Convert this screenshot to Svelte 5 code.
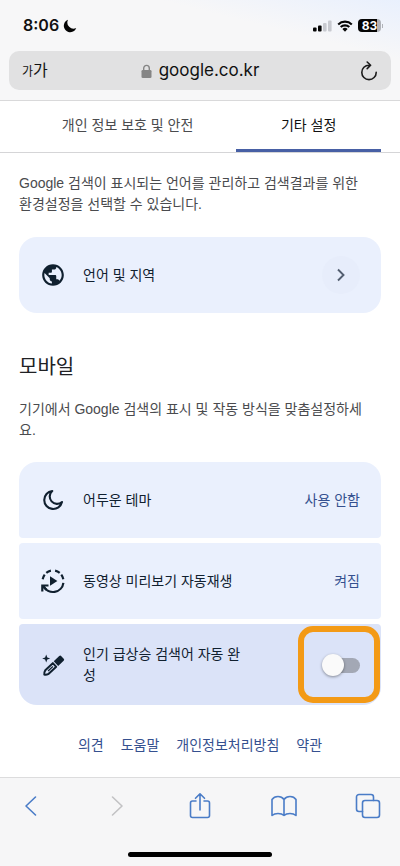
<script>
	let trending = $state(false);
	let activeTab = $state('other');

	const tabs = [
		{ id: 'privacy', label: '개인 정보 보호 및 안전' },
		{ id: 'other', label: '기타 설정' }
	];

	const links = ['의견', '도움말', '개인정보처리방침', '약관'];
</script>

<div class="screen">
	<header class="browser-top">
		<div class="status">
			<div class="status__group">
				<span class="status__time">8:06</span>
				<svg width="14" height="14" viewBox="0 0 14 14" aria-hidden="true">
					<path d="M5 .8A6.4 6.4 0 1 0 13.2 9.1 6.2 6.2 0 0 1 5 .8Z" fill="#050505" />
				</svg>
			</div>
			<div class="status__group status__group--right">
				<svg width="19" height="12" viewBox="0 0 19 12" aria-hidden="true">
					<rect x="0" y="7.5" width="3.6" height="4" rx="1" fill="#050505" />
					<rect x="5" y="5.5" width="3.6" height="6" rx="1" fill="#050505" />
					<rect x="10" y="3" width="3.6" height="8.5" rx="1" fill="#c8cad0" />
					<rect x="15" y="0.5" width="3.6" height="11" rx="1" fill="#c8cad0" />
				</svg>
				<svg width="16" height="12" viewBox="0 0 16 12" aria-hidden="true">
					<path d="M1.2 4.4a9.8 9.8 0 0 1 13.6 0M3.7 7.1a6.2 6.2 0 0 1 8.6 0" fill="none" stroke="#050505" stroke-width="2.1" />
					<path d="M8 11.8 5.4 9.1a3.7 3.7 0 0 1 5.2 0Z" fill="#050505" />
				</svg>
				<span class="battery"><span class="battery__level">83</span></span>
			</div>
		</div>
		<div class="address">
			<button type="button" class="address__size" aria-label="글자 크기"><small>가</small>가</button>
			<div class="address__host">
				<svg width="11" height="14" viewBox="0 0 11 14" aria-hidden="true">
					<path d="M2.7 6.5V4.2a2.8 2.8 0 0 1 5.6 0v2.3" fill="none" stroke="#858585" stroke-width="1.4" />
					<rect x=".5" y="6" width="10" height="8" rx="1.3" fill="#858585" />
				</svg>
				<span>google.co.kr</span>
			</div>
			<button type="button" class="address__reload" aria-label="새로고침">
				<svg width="18" height="20" viewBox="0 0 18 20" fill="none" stroke="#1c1c1c" stroke-width="1.6" stroke-linecap="round" stroke-linejoin="round">
					<path d="M9.8 4.2H9a7.2 7.2 0 1 0 7.2 7.2M7.2 1l3.4 3.3-3.4 3.3" />
				</svg>
			</button>
		</div>
	</header>

	<nav class="tabs" aria-label="설정">
		{#each tabs as tab}
			<button type="button" class="tab" class:is-active={activeTab === tab.id} onclick={() => (activeTab = tab.id)}>
				{tab.label}
			</button>
		{/each}
	</nav>

	<main class="content">
		<p class="intro">Google 검색이 표시되는 언어를 관리하고 검색결과를 위한 환경설정을 선택할 수 있습니다.</p>

		<div class="cards">
			<button type="button" class="card">
				<svg class="card__icon" width="26" height="26" viewBox="0 0 24 24" aria-hidden="true">
					<path
						fill="#10202f"
						d="M12 2C6.48 2 2 6.48 2 12s4.48 10 10 10 10-4.48 10-10S17.52 2 12 2zM4 12c0-.61.08-1.21.21-1.78L8.99 15v1c0 1.1.9 2 2 2v1.93C7.06 19.43 4 16.07 4 12zm13.89 5.4c-.26-.81-1-1.4-1.9-1.4h-1v-3c0-.55-.45-1-1-1h-6v-2h2c.55 0 1-.45 1-1V7h2c1.1 0 2-.9 2-2v-.41C17.92 5.77 20 8.65 20 12c0 2.08-.81 3.98-2.11 5.4z"
					/>
				</svg>
				<span class="card__label">언어 및 지역</span>
				<span class="card__arrow">
					<svg width="10" height="14" viewBox="0 0 10 14" fill="none" stroke="#535e70" stroke-width="1.9" aria-hidden="true">
						<path d="m2 1.500 5.500 5.500L2 12.500" />
					</svg>
				</span>
			</button>
		</div>

		<h2>모바일</h2>
		<p class="hint">기기에서 Google 검색의 표시 및 작동 방식을 맞춤설정하세요.</p>

		<div class="cards">
			<button type="button" class="card">
				<svg class="card__icon" width="26" height="26" viewBox="0 0 26 26" fill="none" stroke="#10202f" stroke-width="2.1" stroke-linejoin="round" aria-hidden="true">
					<path d="M12.200 4A9 9 0 1 0 22 15 7 7 0 0 1 12.200 4Z" />
				</svg>
				<span class="card__label">어두운 테마</span>
				<span class="card__value">사용 안함</span>
			</button>
			<button type="button" class="card">
				<svg class="card__icon" width="26" height="26" viewBox="0 0 26 26" fill="none" stroke="#10202f" stroke-width="2.2" aria-hidden="true">
					<path d="M2.7 11.2a10.5 10.5 0 0 1 2-4.5M6.3 4.9a10.5 10.5 0 0 1 4.600-2.200M15.100 2.700a10.500 10.500 0 0 1 4.600 2.200M21.300 6.700a10.500 10.500 0 0 1 2 4.500M23.400 14.800A10.500 10.500 0 0 1 3.500 18" />
					<path d="M2.300 23.500v-6h6.200M2.500 17.700l4 4" />
					<path d="M10 8.200v9.600l7.400-4.800Z" fill="#10202f" stroke="none" />
				</svg>
				<span class="card__label">동영상 미리보기 자동재생</span>
				<span class="card__value">켜짐</span>
			</button>
			<div class="card card--current">
				<svg class="card__icon" width="26" height="26" viewBox="0 0 26 26" aria-hidden="true">
					<path d="m6.200 2.500 1.100 2.900 2.900 1.100-2.900 1.100-1.100 2.900-1.100-2.900-2.900-1.100 2.900-1.100Z" fill="#10202f" />
					<g transform="rotate(-43 13 14)">
						<path d="M16.800 11h7.500a1.500 1.500 0 0 1 1.500 1.500v3.500a1.500 1.500 0 0 1-1.500 1.500h-7.500Z" fill="#10202f" />
						<path d="M14.800 11.800H4.500Q1.800 12.600.8 14.300q1 1.700 3.700 2.500h10.300Z" fill="none" stroke="#10202f" stroke-width="2" stroke-linejoin="round" />
						<path d="M6 14.300h6.500" stroke="#10202f" stroke-width="1.200" />
					</g>
				</svg>
				<label class="card__label card__label--narrow" for="trending">인기 급상승 검색어 자동 완성</label>
				<input id="trending" class="toggle" type="checkbox" role="switch" bind:checked={trending} />
				<span class="highlight" aria-hidden="true"></span>
			</div>
		</div>

		<footer class="links">
			{#each links as link}
				<a href="#top">{link}</a>
			{/each}
		</footer>
	</main>

	<div class="browser-bottom">
		<nav class="toolbar" aria-label="브라우저">
			<button type="button" aria-label="뒤로">
				<svg width="28" height="28" viewBox="0 0 28 28"><path d="M17.500 5 8 14l9.500 9" /></svg>
			</button>
			<button type="button" aria-label="앞으로" disabled>
				<svg width="28" height="28" viewBox="0 0 28 28"><path d="m10.500 5 9.500 9-9.500 9" /></svg>
			</button>
			<button type="button" aria-label="공유">
				<svg width="28" height="28" viewBox="0 0 28 28">
					<path d="M10 9H6.500a2 2 0 0 0-2 2v12.500a2 2 0 0 0 2 2h15a2 2 0 0 0 2-2V11a2 2 0 0 0-2-2H18M14 18V2M9.500 6.300 14 1.800l4.500 4.500" />
				</svg>
			</button>
			<button type="button" aria-label="책갈피">
				<svg width="28" height="28" viewBox="0 0 28 28">
					<path d="M14 7.500C12.500 5.400 10.500 4.500 8 4.500s-4.700 1-6 3v16c1.500-1.300 3.500-2 6-2s4.700.700 6 2c1.300-1.300 3.500-2 6-2s4.500.700 6 2v-16c-1.300-2-3.500-3-6-3s-4.500.900-6 3ZM14 7.500v16" />
				</svg>
			</button>
			<button type="button" aria-label="탭">
				<svg width="28" height="28" viewBox="0 0 28 28">
					<rect x="8.500" y="8.500" width="17" height="17" rx="2.500" />
					<path d="M8.500 19.500H5a2.500 2.500 0 0 1-2.500-2.500V5A2.500 2.500 0 0 1 5 2.500h12A2.500 2.500 0 0 1 19.500 5v3.500" />
				</svg>
			</button>
		</nav>
		<div class="home-bar"></div>
	</div>
</div>

<style>
	:global(body) {
		margin: 0;
		background: #fff;
	}

	.screen {
		display: flex;
		flex-direction: column;
		min-height: 100vh;
		font-family: 'Liberation Sans', 'Noto Sans CJK KR', sans-serif;
		font-size: 14px;
		line-height: 21px;
		color: #4a4b4e;
	}

	button {
		margin: 0;
		padding: 0;
		border: 0;
		background: none;
		font: inherit;
		color: inherit;
		cursor: pointer;
	}

	svg {
		display: block;
		flex: none;
	}

	.browser-top {
		padding: 0 9px 10px;
		border-bottom: 1px solid #d9d9da;
		background: linear-gradient(to bottom left, #e9f0fd, #f7f7f8 30%);
		font-family: Inter, 'Noto Sans CJK KR', sans-serif;
		color: #111;
	}

	.status {
		display: flex;
		align-items: center;
		justify-content: space-between;
		height: 51px;
		padding: 0 8px 0 14px;
		box-sizing: border-box;
	}

	.status__group {
		display: flex;
		align-items: center;
		gap: 4px;
	}

	.status__group--right {
		gap: 5px;
	}

	.status__time {
		font-size: 16px;
		font-weight: 600;
	}

	.battery {
		display: flex;
		align-items: center;
		gap: 1px;
	}

	.battery__level {
		width: 23px;
		border-radius: 4px;
		background: linear-gradient(to right, #050505 83%, #b0b2b8 83%);
		font-size: 12px;
		font-weight: 700;
		line-height: 13px;
		text-align: center;
		color: #fff;
	}

	.battery::after {
		content: '';
		width: 1px;
		height: 4px;
		background: #b0b2b8;
	}

	.address {
		display: grid;
		grid-template-columns: 1fr auto 1fr;
		align-items: center;
		height: 39px;
		padding: 0 13px;
		border-radius: 10px;
		background: #e1e1e2;
	}

	.address__size {
		justify-self: start;
		font-size: 16px;
	}

	.address__size small {
		font-size: 12px;
	}

	.address__host {
		display: flex;
		align-items: center;
		gap: 7px;
		font-size: 17px;
	}

	.address__reload {
		justify-self: end;
	}

	.tabs {
		display: flex;
		justify-content: space-between;
		padding: 0 19px;
		border-bottom: 1px solid #d5d5d7;
	}

	.tab {
		flex: 3;
		height: 51px;
		border-bottom: 3px solid transparent;
	}

	.tab:last-child {
		flex: 2;
	}

	.tab.is-active {
		border-color: #4760a5;
		color: #111;
	}

	.content {
		flex: 1;
		padding: 20px 19px;
	}

	p {
		margin: 0;
		padding-right: 12px;
	}

	.intro {
		margin-bottom: 22px;
	}

	.hint {
		margin-bottom: 21px;
		word-break: break-all;
	}

	h2 {
		margin: 40px 0 18px;
		font-size: 20px;
		font-weight: 400;
		line-height: 28px;
		color: #202124;
	}

	.cards {
		display: flex;
		flex-direction: column;
		gap: 5px;
	}

	.card {
		position: relative;
		display: flex;
		align-items: center;
		min-height: 76px;
		padding: 0 21px;
		border-radius: 4px;
		background: #eaf0fd;
		text-align: left;
		color: #10202f;
	}

	.card:first-child {
		border-top-left-radius: 18px;
		border-top-right-radius: 18px;
	}

	.card:last-child {
		border-bottom-left-radius: 18px;
		border-bottom-right-radius: 18px;
	}

	.card--current {
		min-height: 81px;
		background: #dbe3f8;
	}

	.card__icon {
		margin-right: 17px;
	}

	.card__label {
		flex: 1;
	}

	.card__label--narrow {
		margin-right: 76px;
		word-break: break-all;
	}

	.card__arrow {
		display: grid;
		place-items: center;
		width: 38px;
		height: 38px;
		border-radius: 50%;
		background: #e7edfb;
	}

	.card__value {
		color: #35508f;
	}

	.toggle {
		position: relative;
		width: 38px;
		height: 22px;
		margin: 0;
		appearance: none;
		cursor: pointer;
	}

	.toggle::before {
		content: '';
		position: absolute;
		inset: 4px 0 3px 3px;
		border-radius: 8px;
		background: #a3a8b5;
	}

	.toggle::after {
		content: '';
		position: absolute;
		top: 0;
		left: 0;
		width: 22px;
		height: 22px;
		border-radius: 50%;
		background: #fafafa;
		box-shadow: 0 1px 3px rgba(0, 0, 0, 0.4);
	}

	.toggle:checked::before {
		background: #8fa8e0;
	}

	.toggle:checked::after {
		left: 16px;
		background: #405993;
	}

	.highlight {
		position: absolute;
		top: 2px;
		right: 1px;
		bottom: 2px;
		width: 82px;
		box-sizing: border-box;
		border: 6px solid #f39a16;
		border-radius: 15px;
		pointer-events: none;
	}

	.links {
		display: flex;
		justify-content: center;
		gap: 17px;
		margin-top: 30px;
	}

	.links a {
		color: #35508f;
		text-decoration: none;
	}

	.browser-bottom {
		border-top: 1px solid #dcdcdd;
		background: #f6f6f7;
	}

	.toolbar {
		display: flex;
		justify-content: space-between;
		padding: 14px 18px 32px;
	}

	.toolbar svg {
		fill: none;
		stroke: #4a7cc7;
		stroke-width: 1.6;
		stroke-linecap: round;
		stroke-linejoin: round;
	}

	.toolbar button:disabled svg {
		stroke: #c2c2c4;
	}

	.home-bar {
		width: 36%;
		height: 5px;
		margin: 0 auto 9px;
		border-radius: 3px;
		background: #000;
	}
</style>
